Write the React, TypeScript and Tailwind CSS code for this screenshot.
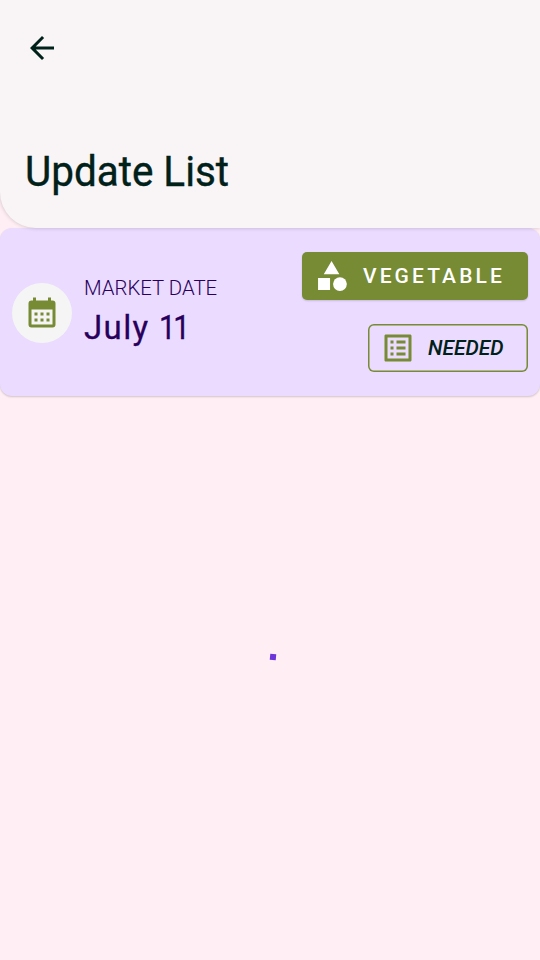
const TITLE_FONT = "font-['Roboto','Noto_Sans',sans-serif]";

function Header() {
  return (
    <header className="relative z-10 h-[228px] rounded-bl-[36px] bg-[#f9f5f6] shadow-[0_0_4px_rgba(0,0,0,0.2)]">
      <div className="pt-[30px] pl-6">
        <svg className="block size-9" viewBox="0 0 24 24" fill="#00201a" aria-label="Back">
          <path d="M20 11H7.83l5.59-5.59L12 4l-8 8 8 8 1.41-1.41L7.83 13H20z" />
        </svg>
      </div>
      <h1 className="mt-[80px] ml-[25px] w-max origin-left scale-x-[0.94] text-[43px] leading-[50px] text-[#00201a] [-webkit-text-stroke:0.4px_#00201a]">
        Update List
      </h1>
    </header>
  );
}

function CalendarIcon() {
  return (
    <svg className="block size-9" viewBox="0 0 24 24" fill="#768b34">
      <path d="M7 11h2v2H7zM11 11h2v2h-2zM15 11h2v2h-2zM7 15h2v2H7zM11 15h2v2h-2zM15 15h2v2h-2z" />
      <path fillRule="evenodd" d="M19 3h-1V1h-2v2H8V1H6v2H5a2 2 0 0 0-2 2v14a2 2 0 0 0 2 2h14a2 2 0 0 0 2-2V5a2 2 0 0 0-2-2zM5 9h14v10H5z" />
    </svg>
  );
}

function CategoryIcon() {
  return (
    <svg className="block size-9" viewBox="0 0 24 24" fill="#fff">
      <path d="M11.7 2l-5.2 8.8h10.4zM2.7 13.4h8v8h-8z" />
      <circle cx="17.3" cy="17.4" r="4.6" />
    </svg>
  );
}

function ListIcon() {
  return (
    <svg className="block size-9" viewBox="0 0 24 24" fill="#768b34">
      <path
        fillRule="evenodd"
        d="M20.1 3H3.9c-.5 0-.9.4-.9.9v16.2c0 .4.4.9.9.9h16.2c.4 0 .9-.5.9-.9V3.9c0-.5-.5-.9-.9-.9zM19 19H5V5h14z"
      />
      <path d="M11 7h6v2h-6zM11 11h6v2h-6zM11 15h6v2h-6zM7 7h2v2H7zM7 11h2v2H7zM7 15h2v2H7z" />
    </svg>
  );
}

export default function App() {
  return (
    <main className={`h-[960px] w-[540px] overflow-hidden bg-[#ffeef3] ${TITLE_FONT}`}>
      <Header />
      <section className="flex h-[168px] items-start justify-between rounded-xl bg-[#eadbff] px-3 shadow-[0_1px_2px_rgba(0,0,0,0.18)]">
        <div className="flex pt-[48px]">
          <div className="mt-[6.5px] flex size-[60px] items-center justify-center rounded-full bg-[#f5f5f5] pt-[2px]">
            <CalendarIcon />
          </div>
          <div className="ml-3 text-[#28005b]">
            <div className="w-max origin-left scale-x-[0.97] text-[21px] leading-6 font-light">MARKET DATE</div>
            <div className="mt-[8px] flex w-max text-[33px] leading-10 [-webkit-text-stroke:0.3px_#28005b]">
              <span className="tracking-[1.4px] whitespace-pre">July </span>
              <span className="w-max origin-left scale-x-[0.9] tracking-[-2.8px]">11</span>
            </div>
          </div>
        </div>
        <div className="flex flex-col items-end gap-6 pt-6">
          <button className="flex h-12 w-[226.5px] items-center rounded-[5px] bg-[#768b34] pl-3 text-[21px] font-medium text-white shadow-[0_1px_2px_rgba(0,0,0,0.15)]">
            <CategoryIcon />
            <span className="ml-[13.5px] pt-[2px] tracking-[3.1px]">VEGETABLE</span>
          </button>
          <button className="flex h-12 w-[160px] items-center rounded-[6px] pl-3 text-[21px] font-medium text-[#00201a] italic shadow-[inset_0_0_0_1.5px_#768b34]">
            <ListIcon />
            <span className="ml-3 pt-[2px]">NEEDED</span>
          </button>
        </div>
      </section>
      <div className="flex justify-center pt-[258px] pl-[5px]" role="progressbar" aria-label="Loading">
        <div className="size-[6px] rotate-[5deg] bg-[#6b35d9]" />
      </div>
    </main>
  );
}
